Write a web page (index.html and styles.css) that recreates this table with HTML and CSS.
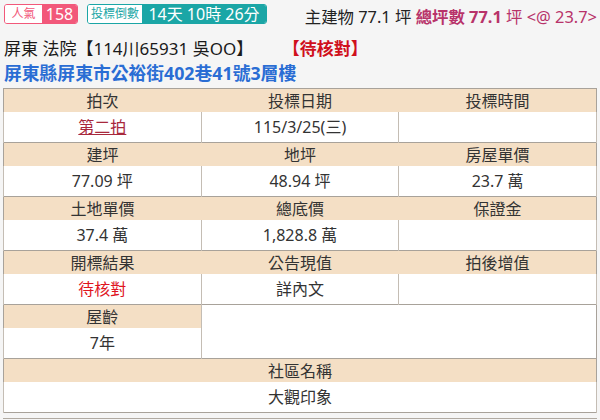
FILE: index.html
```html
<!DOCTYPE html>
<html lang="zh-Hant">
<head>
<meta charset="utf-8">
<link rel="stylesheet" href="styles.css">
</head>
<body>
<div class="page">
  <div class="topbar">
    <div class="badges">
      <span class="badge badge-pink"><span class="badge-label">人氣</span><span class="badge-value">158</span></span>
      <span class="badge badge-teal"><span class="badge-label">投標倒數</span><span class="badge-value">14天 10時 26分</span></span>
    </div>
    <div class="area">主建物 77.1 坪 <span class="total"><span class="strong">總坪數 77.1</span> 坪 &lt;@ 23.7&gt;</span></div>
  </div>
  <div class="case">屏東 法院【114川65931 吳OO】<span class="status">【待核對】</span></div>
  <div class="address">屏東縣屏東市公裕街402巷41號3層樓</div>
  <table class="info">
    <tr class="head"><th>拍次</th><th>投標日期</th><th>投標時間</th></tr>
    <tr class="data"><td><a class="link">第二拍</a></td><td>115/3/25(三)</td><td></td></tr>
    <tr class="head"><th>建坪</th><th>地坪</th><th>房屋單價</th></tr>
    <tr class="data"><td>77.09 坪</td><td>48.94 坪</td><td>23.7 萬</td></tr>
    <tr class="head"><th>土地單價</th><th>總底價</th><th>保證金</th></tr>
    <tr class="data"><td>37.4 萬</td><td>1,828.8 萬</td><td></td></tr>
    <tr class="head"><th>開標結果</th><th>公告現值</th><th>拍後增值</th></tr>
    <tr class="data"><td class="red">待核對</td><td>詳內文</td><td></td></tr>
    <tr class="head"><th>屋齡</th><td class="blank" colspan="2" rowspan="2"></td></tr>
    <tr class="data"><td>7年</td></tr>
    <tr class="head"><th colspan="3">社區名稱</th></tr>
    <tr class="data"><td colspan="3">大觀印象</td></tr>
  </table>
  <div class="next"></div>
</div>
</body>
</html>
```
FILE: styles.css
```css
* { box-sizing: border-box; }
html, body { margin: 0; padding: 0; }
body {
  background: #f5f5f5;
  font-family: "Noto Sans", "Noto Sans CJK TC", sans-serif;
  color: #222;
  width: 600px;
  height: 420px;
  overflow: hidden;
}
.page { padding: 4px 3px 0 3px; }
.topbar {
  display: flex;
  justify-content: space-between;
  align-items: center;
  height: 20px;
}
.badges { display: flex; gap: 9px; margin-left: 1px; }
.badge {
  display: inline-flex;
  height: 20px;
  border-radius: 3px;
  align-items: stretch;
  white-space: nowrap;
}
.badge-label {
  background: #fff;
  font-size: 12px;
  line-height: 18px;
  display: flex;
  align-items: center;
  justify-content: center;
  border-radius: 2px 0 0 2px;
}
.badge-value {
  font-size: 16px;
  line-height: 18px;
  color: #fff;
  display: flex;
  align-items: center;
  justify-content: center;
  border-radius: 0 2px 2px 0;
}
.badge-pink { border: 1px solid #f2587a; }
.badge-pink .badge-label { color: #f2587a; width: 37px; }
.badge-pink .badge-value { background: #f2587a; width: 35px; }
.badge-teal { border: 1px solid #1ba6a6; }
.badge-teal .badge-label { color: #1ba6a6; width: 54px; }
.badge-teal .badge-value { background: #1ba6a6; width: 124px; }
.area {
  font-size: 16.4px;
  color: #222;
  margin-top: 4px;
  white-space: nowrap;
}
.total { color: #b8336a; }
.strong { font-weight: 700; }
.case {
  margin-top: 12px;
  font-size: 17px;
  line-height: 25px;
  color: #1a1a1a;
  padding-left: 1px;
}
.status { color: #d0101c; font-weight: 700; margin-left: 38px; }
.address {
  font-size: 17.8px;
  line-height: 25px;
  font-weight: 700;
  color: #2a6dd4;
  padding-left: 1px;
}
.info {
  margin-top: 2px;
  width: 594px;
  border-collapse: collapse;
  table-layout: fixed;
  border: 1px solid #a8a29a;
  font-size: 16px;
  background: #fff;
}
.info th, .info td {
  text-align: center;
  padding: 0;
  font-weight: 400;
  color: #333;
  line-height: 20px;
}
.info tr.head th {
  background: #f4dfc5;
  height: 23.5px;
  border-top: 1px solid #a8a29a;
}
.info tr.data td {
  height: 30.5px;
  border-left: 1px solid #c4bdb4;
  border-right: 1px solid #c4bdb4;
}
.info td.blank {
  border-top: 1px solid #a8a29a;
  border-left: 1px solid #c4bdb4;
  background: #fff;
}
.link { color: #a8283c; text-decoration: underline; }
.red { color: #e0141e !important; }
.next {
  margin-top: 5px;
  height: 4px;
  border-top: 1px solid #b0aaa2;
}
```
